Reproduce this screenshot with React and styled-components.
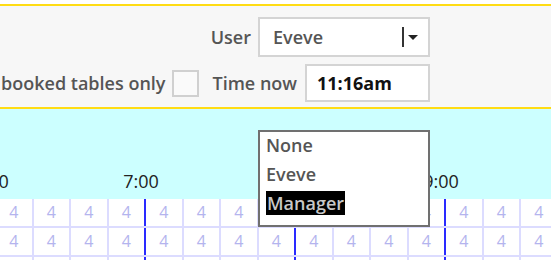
import React from 'react';
import styled, { createGlobalStyle } from 'styled-components';

const GlobalStyle = createGlobalStyle`
  body {
    margin: 0;
    background: #ffffff;
    font-family: "Open Sans", "Liberation Sans", sans-serif;
    overflow: hidden;
  }
`;

const Page = styled.div`
  width: 551px;
  height: 260px;
  padding-top: 4px;
  box-sizing: border-box;
  overflow: hidden;
`;

const Header = styled.header`
  height: 105px;
  box-sizing: border-box;
  background: #f7f7f7;
  border-top: 2px solid #ffdc14;
  border-bottom: 2px solid #ffdc14;
  padding: 11px 121px 0 0;
  display: flex;
  flex-direction: column;
  align-items: flex-end;
  gap: 7px;
`;

const Row = styled.div`
  display: flex;
  align-items: center;
  justify-content: flex-end;
  white-space: nowrap;
  width: 100%;
  & > * {
    flex-shrink: 0;
  }
`;

const Label = styled.span`
  font-size: 18px;
  font-weight: 600;
  color: #555;
  margin-right: ${props => props.gap || 7}px;
`;

const SelectWrap = styled.div`
  position: relative;
`;

const SelectBox = styled.div`
  width: 172px;
  height: 40px;
  box-sizing: border-box;
  background: #fff;
  border: 2px solid #d4d4d4;
  display: flex;
  align-items: center;
  padding: 0 10px 0 13px;
  font-size: 18px;
  font-weight: 600;
  color: #555;
`;

const SelectValue = styled.span`
  flex: 1;
`;

const Separator = styled.span`
  width: 2px;
  height: 20px;
  background: #333;
  margin-right: 4px;
`;

const Arrow = styled.span`
  width: 0;
  height: 0;
  border-left: 5px solid transparent;
  border-right: 5px solid transparent;
  border-top: 5px solid #222;
`;

const Menu = styled.ul`
  position: absolute;
  left: 0;
  top: 113px;
  width: 172px;
  height: 97px;
  box-sizing: border-box;
  margin: 0;
  padding: 0 0 0 6px;
  list-style: none;
  background: #fff;
  border: 2px solid #707070;
  z-index: 5;
`;

const MenuItem = styled.li`
  height: 29px;
  line-height: 27px;
  font-size: 18px;
  font-weight: 600;
  color: #555;
`;

const Highlight = styled.span`
  background: #000;
  color: #c8c8c8;
  padding: 0 1px;
`;

const Checkbox = styled.span`
  width: 27px;
  height: 27px;
  box-sizing: border-box;
  border: 2px solid #d0d0d0;
  background: #fafafa;
  margin-right: 13px;
`;

const TimeInput = styled.div`
  width: 125px;
  height: 38px;
  box-sizing: border-box;
  background: #fff;
  border: 2px solid #d4d4d4;
  display: flex;
  align-items: center;
  padding-left: 10px;
  font-size: 18px;
  font-weight: 700;
  color: #111;
`;

const Board = styled.section`
  background: #ccffff;
  height: 151px;
  overflow: hidden;
`;

const Hours = styled.div`
  height: 90px;
  display: flex;
  align-items: flex-end;
  margin-left: -84px;
`;

const HourLabel = styled.span`
  flex: 0 0 150px;
  text-align: center;
  font-size: 18px;
  color: #222;
  line-height: 24px;
  padding-bottom: 6px;
`;

const Grid = styled.div`
  background: #fff;
  margin-left: -6px;
`;

const GridRow = styled.div`
  display: flex;
  height: 29px;
  box-sizing: border-box;
  border-bottom: 2px solid #dcdcff;
`;

const Cell = styled.span`
  flex: 0 0 37.5px;
  box-sizing: border-box;
  border-left: 2px solid ${props => (props.hour ? '#2a2aff' : '#dcdcff')};
  text-align: center;
  line-height: 27px;
  font-size: 16px;
  color: #b4b4ee;
`;

const hours = ['6:00', '7:00', '8:00', '9:00', '10:00'];
const cells = Array.from({ length: 16 }, (_, i) => i);

export default function App() {
  return (
    <Page>
      <GlobalStyle />
      <Header>
        <Row>
          <Label>User</Label>
          <SelectWrap>
            <SelectBox>
              <SelectValue>Eveve</SelectValue>
              <Separator />
              <Arrow />
            </SelectBox>
            <Menu>
              <MenuItem>None</MenuItem>
              <MenuItem>Eveve</MenuItem>
              <MenuItem><Highlight>Manager</Highlight></MenuItem>
            </Menu>
          </SelectWrap>
        </Row>
        <Row>
          <Label>Show booked tables only</Label>
          <Checkbox />
          <Label gap={8}>Time now</Label>
          <TimeInput>11:16am</TimeInput>
        </Row>
      </Header>
      <Board>
        <Hours>
          {hours.map(h => <HourLabel key={h}>{h}</HourLabel>)}
        </Hours>
        <Grid>
          {[0, 1, 2].map(r => (
            <GridRow key={r}>
              {cells.map(c => <Cell key={c} hour={c % 4 === 0}>4</Cell>)}
            </GridRow>
          ))}
        </Grid>
      </Board>
    </Page>
  );
}
